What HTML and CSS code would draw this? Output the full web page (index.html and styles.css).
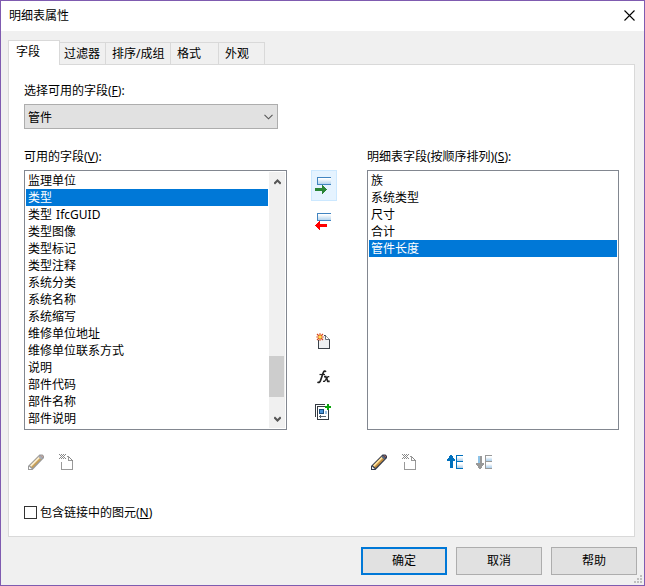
FILE: index.html
```
<!DOCTYPE html>
<html lang="zh-CN">
<head>
<meta charset="utf-8">
<title>明细表属性</title>
<link rel="stylesheet" href="styles.css">
</head>
<body>
<svg class="defs" width="0" height="0">
  <defs>
    <linearGradient id="blue" x1="0" y1="0" x2="0" y2="1"><stop offset="0.200" stop-color="#fff"/><stop offset="1" stop-color="#a9cdea"/></linearGradient>
    <symbol id="pencil" viewBox="0 0 16 16">
      <path d="M0 16v-4L11.500.500h3L16 2v2L4.500 16z" fill="#333b4c"/>
      <path d="M2 11.500l9-9 2.500 2.500-9 9z" fill="#c28c3c"/>
      <path d="M2 11.500l9-9 1.200 1.200-9 9z" fill="#ffe3a0"/>
      <path d="M10.500 3l2.500 2.500 1.500-1.500L12 1.500z" fill="#5b6880"/>
      <path d="M12.500 1.500h1.500l1 1v1z" fill="#c86d59"/>
      <path d="M1 12.500l2.800 2.500H1z" fill="#f2f2f2"/>
    </symbol>
    <symbol id="pencil-off" viewBox="0 0 16 16">
      <path d="M0 16v-4L11.500.500h3L16 2v2L4.500 16z" fill="#999"/>
      <path d="M2 11.500l9-9 2.500 2.500-9 9z" fill="#c9a057"/>
      <path d="M2 11.500l9-9 1.200 1.200-9 9z" fill="#fbeed0"/>
      <path d="M10.500 3l2.500 2.500 1.500-1.500L12 1.500z" fill="#a9aeb8"/>
      <path d="M12.500 1.500h1.500l1 1v1z" fill="#d5aaa1"/>
      <path d="M1 12.500l2.800 2.500H1z" fill="#fff"/>
    </symbol>
    <symbol id="delete" viewBox="0 0 14 16">
      <path d="M2.500 8v7.500h11V7M8 2.500h2M9.500 2.500v4h4" fill="none" stroke="#999"/>
      <path d="M10 3h1v1h-1zM11 4h1v1h-1zM12 5h1v1h-1zM13 6h1v1h-1zM0 0h1v1H0zM2 0h1v1H2zM4 0h1v1H4zM6 0h1v1H6zM1 1h1v1H1zM3 1h1v1H3zM5 1h1v1H5zM2 2h1v1H2zM4 2h1v1H4zM1 3h1v1H1zM3 3h1v1H3zM5 3h1v1H5zM2 4h1v1H2zM4 4h1v1H4zM0 4h1v1H0zM6 4h1v1H6z" fill="#888"/>
    </symbol>
  </defs>
</svg>
<div class="dialog">
  <header class="titlebar">
    <span>明细表属性</span>
    <svg class="close" width="11" height="11" viewBox="0 0 11 11"><path d="M.5 .5l10 10M10.500 .5l-10 10" stroke="#000" stroke-width="1.100"/></svg>
  </header>
  <nav class="tabs">
    <div class="tab active">字段</div>
    <div class="tab filter">过滤器</div>
    <div class="tab sort">排序/成组</div>
    <div class="tab format">格式</div>
    <div class="tab look">外观</div>
  </nav>
  <main class="panel">
    <div class="label">选择可用的字段(<u>F</u>):</div>
    <div class="combo"><span>管件</span><svg width="9" height="6" viewBox="0 0 9 6"><path d="M.5 .8l4 4 4-4" fill="none" stroke="#555" stroke-width="1.100"/></svg></div>
    <div class="columns">
      <section class="available">
        <div class="label">可用的字段(<u>V</u>):</div>
        <div class="list">
          <ul>
            <li>监理单位</li>
            <li class="selected">类型</li>
            <li>类型 IfcGUID</li>
            <li>类型图像</li>
            <li>类型标记</li>
            <li>类型注释</li>
            <li>系统分类</li>
            <li>系统名称</li>
            <li>系统缩写</li>
            <li>维修单位地址</li>
            <li>维修单位联系方式</li>
            <li>说明</li>
            <li>部件代码</li>
            <li>部件名称</li>
            <li>部件说明</li>
          </ul>
          <div class="scrollbar">
            <svg width="7" height="6" viewBox="0 0 7 6"><path d="M.3 4.700L3.500 1.500l3.200 3.200" fill="none" stroke="#555" stroke-width="2"/></svg>
            <div class="thumb"></div>
            <svg width="7" height="6" viewBox="0 0 7 6"><path d="M.3 1.300l3.200 3.200 3.200-3.200" fill="none" stroke="#555" stroke-width="2"/></svg>
          </div>
        </div>
        <div class="tools">
          <svg class="pen" width="16" height="16"><use href="#pencil-off"/></svg>
          <svg class="del" width="14" height="16" shape-rendering="crispEdges"><use href="#delete"/></svg>
        </div>
      </section>
      <div class="actions">
        <div class="add">
          <svg width="16" height="17" viewBox="0 0 16 17" shape-rendering="crispEdges"><rect x="2" width="14" height="8" fill="url(#blue)"/><path d="M16 .5H2.500v7H16" fill="none" stroke="#4184c0"/><path d="M0 11h7V8h1v1h1v1h1v1h1v1h1v1h-1v1h-1v1H9v1H8v1H7v-3H0z" fill="#2a8536"/></svg>
        </div>
        <svg class="remove" width="16" height="17" viewBox="0 0 16 17" shape-rendering="crispEdges"><rect x="2" width="14" height="8" fill="url(#blue)"/><path d="M16 .5H2.500v7H16" fill="none" stroke="#4184c0"/><path d="M12 11H5V8H4v1H3v1H2v1H1v1H0v1h1v1h1v1h1v1h1v1h1v-3h7z" fill="#f00"/></svg>
        <svg class="new" width="14" height="16" viewBox="0 0 14 16">
          <path d="M1.500 7v8.500h11v-9l-4-4H7" fill="#eef0f2" stroke="#3b4249" shape-rendering="crispEdges"/><path d="M8.500 2.500v4h4" fill="#fff" stroke="#68717b"/>
        </svg>
        <svg class="spark" width="8" height="8" viewBox="0 0 8 8"><path d="M4 .3v7.400M.3 4h7.400M1 1l6 6M7 1L1 7" stroke="#d8481a" stroke-width="1.200"/><circle cx="4" cy="4" r="1.700" fill="#ffe14c"/></svg>
        <svg class="fx" width="13" height="14" viewBox="0 0 13 14">
          <path d="M9 1.800Q7.500 0 6.300 2.500L3.700 10Q2.600 13.500 .5 12" fill="none" stroke="#222" stroke-width="1.700"/>
          <path d="M2.500 4.500h5.500" stroke="#222" stroke-width="1.200"/>
          <path d="M7 6.700h1.800l2 4.600h1.900" fill="none" stroke="#222" stroke-width="1.700"/>
          <path d="M12.300 6.700h-1.300L7.500 11.300H6" fill="none" stroke="#222" stroke-width="1.200"/>
        </svg>
        <svg class="combine" width="16" height="17" viewBox="0 0 16 17" shape-rendering="crispEdges">
          <path d="M.5 13V.5H10" fill="none" stroke="#343b42"/>
          <rect x="2.500" y="2.500" width="11" height="13" fill="#fff" stroke="#343b42"/>
          <rect x="4" y="5" width="5" height="5" fill="#174b7d"/><rect x="5" y="6" width="3" height="3" fill="#4b95d8"/>
          <path d="M10 7h2v3h-2z" fill="#9fc4e5"/><path d="M5 12h6v1H5zM4 12h1v1H4zM5 11h1v3H5z" fill="#59636e"/>
          <path d="M10 2h2V0h2v2h2v2h-2v2h-2V4h-2z" fill="#09a30b"/>
        </svg>
      </div>
      <section class="scheduled">
        <div class="label">明细表字段(按顺序排列)(<u>S</u>):</div>
        <div class="list">
          <ul>
            <li>族</li>
            <li>系统类型</li>
            <li>尺寸</li>
            <li>合计</li>
            <li class="selected">管件长度</li>
          </ul>
        </div>
        <div class="tools">
          <svg class="pen" width="16" height="16"><use href="#pencil"/></svg>
          <svg class="del" width="14" height="16" shape-rendering="crispEdges"><use href="#delete"/></svg>
          <svg class="up" width="16" height="14" viewBox="0 0 16 14" shape-rendering="crispEdges"><path d="M3 13V6H0V4h1V3h1V1h1V0h2v1h1v2h1v1h1v2H6v7z" fill="#0070bd"/><rect x="10" y="1" width="6" height="5" fill="url(#blue)"/><rect x="10" y="8" width="6" height="5" fill="url(#blue)"/><path d="M16 .5H9.500v13H16M9 6.500h7" fill="none" stroke="#0070bd"/></svg>
          <svg class="down" width="16" height="14" viewBox="0 0 16 14" shape-rendering="crispEdges"><path d="M3 1h3v7h2v2H7v1H6v2H5v1H3v-1H2v-2H1v-1H0V8h3z" fill="#999"/><path d="M2 1h2v7H2z" fill="#8dc3e8"/><rect x="10" y="1" width="6" height="5" fill="url(#blue)"/><rect x="10" y="8" width="6" height="5" fill="url(#blue)"/><path d="M16 .5H9.500v13H16M9 6.500h7" fill="none" stroke="#999"/></svg>
        </div>
      </section>
    </div>
    <div class="check"><i></i><span>包含链接中的图元(<u>N</u>)</span></div>
  </main>
  <footer class="buttons">
    <div class="button primary">确定</div>
    <div class="button">取消</div>
    <div class="button">帮助</div>
  </footer>
  <svg class="grip" width="8" height="8" viewBox="0 0 8 8"><path d="M6 0h2v2H6zM3 3h2v2H3zM6 3h2v2H6zM0 6h2v2H0zM3 6h2v2H3zM6 6h2v2H6z" fill="#bfbfbf"/></svg>
</div>
</body>
</html>
```
FILE: styles.css
```
* { box-sizing: border-box; }
body {
  margin: 0;
  font: 12px/18px "Noto Sans", "Noto Sans CJK SC", sans-serif;
  color: #000;
  overflow: hidden;
}
svg { display: block; flex: none; }
.defs { position: absolute; }
u { text-underline-offset: 1px; }
.dialog {
  position: relative;
  width: 645px;
  height: 586px;
  border: 1px solid #7f5bb0;
  background: #f0f0f0;
}
.titlebar {
  display: flex;
  align-items: center;
  justify-content: space-between;
  height: 30px;
  padding: 0 9px 0 8px;
  background: #fff;
}
.close { margin-bottom: 2px; }
.tabs {
  display: flex;
  align-items: flex-end;
  height: 33px;
  padding-left: 7px;
}
.tab {
  height: 22px;
  padding-left: 6px;
  line-height: 22px;
  border: 1px solid #d9d9d9;
  border-left: 0;
  border-bottom: 0;
  white-space: nowrap;
}
.tab.active {
  position: relative;
  z-index: 1;
  width: 52px;
  height: 25px;
  margin-bottom: -1px;
  padding-left: 7px;
  line-height: 22px;
  border-left: 1px solid #d9d9d9;
  background: #fff;
}
.filter { width: 46px; padding-left: 4px; }
.sort { width: 65px; }
.format { width: 48px; }
.look { width: 46px; }
.panel {
  width: 627px;
  height: 473px;
  margin-left: 7px;
  padding: 16px 15px 0;
  border: 1px solid #d9d9d9;
  background: #fff;
}
.label { height: 18px; line-height: 20px; white-space: nowrap; }
.combo {
  display: flex;
  align-items: center;
  justify-content: space-between;
  width: 254px;
  height: 25px;
  margin-top: 5px;
  padding: 0 4px 0 3px;
  border: 1px solid #adadad;
  background: #e1e1e1;
}
.combo span { padding-top: 2px; }
.columns { display: flex; margin-top: 18px; }
.available { width: 263px; }
.scheduled { width: 252px; margin-left: 30px; }
.list {
  display: flex;
  height: 260px;
  margin-top: 5px;
  padding: 1px;
  border: 1px solid #828790;
}
.list ul { flex: 1; margin: 0; padding: 0; list-style: none; }
.list li { height: 17px; padding-left: 2px; line-height: 18px; word-spacing: 1px; }
.list li.selected { background: #0078d7; color: #fff; }
.scrollbar {
  display: flex;
  flex-direction: column;
  align-items: center;
  width: 16px;
  margin-left: 1px;
  padding: 7px 0 6px;
  background: #f0f0f0;
}
.thumb { width: 15px; height: 41px; margin: auto 1px 19px 0; background: #cdcdcd; }
.tools { display: flex; height: 17px; margin-top: 24px; padding-left: 4px; }
.del { margin-left: 15px; }
.up { margin: 1px 0 0 31px; }
.down { margin: 1px 0 0 13px; }
.actions { width: 26px; margin-left: 24px; padding-top: 23px; }
.add {
  width: 26px;
  height: 31px;
  padding: 6px 0 0 3px;
  border: 1px solid #cce8ff;
  background: #e5f3ff;
}
.remove { margin: 12px 0 0 4px; }
.new { margin: 103px 0 0 6px; }
.spark { margin: -16px 0 0 5px; }
.fx { margin: 29px 0 0 6px; }
.combine { margin: 20px 0 0 4px; }
.check { display: flex; align-items: center; height: 18px; margin-top: 33px; }
.check i { width: 13px; height: 13px; margin: 0 3px 2px 0; border: 1px solid #333; }
.buttons { display: flex; justify-content: flex-end; gap: 9px; padding: 10px 7px 0 0; }
.button {
  width: 86px;
  height: 28px;
  line-height: 26px;
  text-align: center;
  border: 1px solid #adadad;
  background: #e1e1e1;
}
.primary { border: 2px solid #0078d7; line-height: 24px; }
.grip { position: absolute; right: 2px; bottom: 2px; }
```
